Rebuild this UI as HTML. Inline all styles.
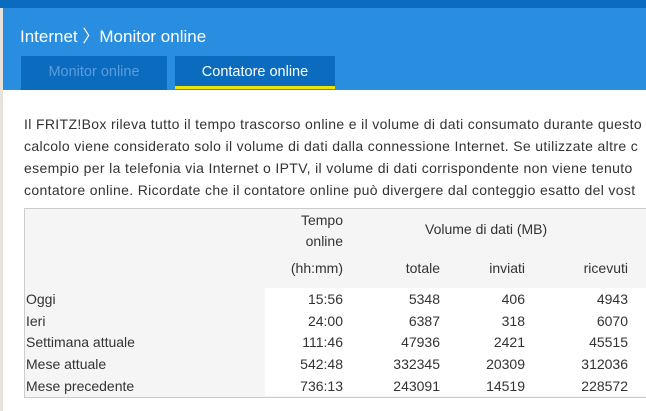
<!DOCTYPE html>
<html><head><meta charset="utf-8"><style>
*{margin:0;padding:0;box-sizing:border-box}
body{width:646px;height:411px;overflow:hidden;background:#fff;font-family:"Liberation Sans",sans-serif;color:#333;position:relative}
.top{position:absolute;left:0;top:0;width:646px;height:8px;background:#0a6bbf}
.strip{position:absolute;left:0;top:8px;width:3px;height:403px;background:#e6e3dc}
.hdr{position:absolute;left:3px;top:8px;width:643px;height:82px;background:#2a8ee0}
.title{position:absolute;left:20px;top:22px;color:#fff;font-size:17px}
.tab{position:absolute;top:56px;height:34px;background:#0a6bbf;font-size:14.5px;text-align:center;line-height:32px}
.t1{left:21px;width:146px;color:#5c9cdc}
.t2{left:175px;width:160px;color:#fff;border-bottom:3px solid #f0e400;height:33px}
.p{position:absolute;left:24px;top:113px;font-size:14px;line-height:22px;white-space:nowrap;color:#333;letter-spacing:0.35px}
.tbl{position:absolute;left:24px;top:208px;width:640px;height:190px;border:1px solid #ccc;background:#f5f5f5}
.white{position:absolute;left:240px;top:79px;width:400px;height:108px;background:#fff}
.t{position:absolute;font-size:14px;white-space:nowrap}
.r{text-align:right}
</style></head><body>
<div class="top"></div><div class="strip"></div>
<div class="hdr"></div>
<div class="title">Internet 〉Monitor online</div>
<div class="tab t1">Monitor online</div>
<div class="tab t2">Contatore online</div>
<div class="p">Il FRITZ!Box rileva tutto il tempo trascorso online e il volume di dati consumato durante questo<br>calcolo viene considerato solo il volume di dati dalla connessione Internet. Se utilizzate altre c<br>esempio per la telefonia via Internet o IPTV, il volume di dati corrispondente non viene tenuto<br>contatore online. Ricordate che il contatore online può divergere dal conteggio esatto del vost</div>
<div class="tbl"><div class="white"></div></div>
<div class="t r" style="left:243px;width:100px;top:210px;line-height:21px">Tempo<br>online</div>
<div class="t" style="left:425px;top:221px">Volume di dati (MB)</div>
<div class="t r" style="left:243px;width:100px;top:260px">(hh:mm)</div>
<div class="t r" style="left:340px;width:100px;top:260px">totale</div>
<div class="t r" style="left:425px;width:100px;top:260px">inviati</div>
<div class="t r" style="left:528px;width:100px;top:260px">ricevuti</div>
<div class="t" style="left:26px;top:289px;line-height:21.7px">Oggi<br>Ieri<br>Settimana attuale<br>Mese attuale<br>Mese precedente</div>
<div class="t r" style="left:243px;width:100px;top:289px;line-height:21.7px">15:56<br>24:00<br>111:46<br>542:48<br>736:13</div>
<div class="t r" style="left:340px;width:100px;top:289px;line-height:21.7px">5348<br>6387<br>47936<br>332345<br>243091</div>
<div class="t r" style="left:425px;width:100px;top:289px;line-height:21.7px">406<br>318<br>2421<br>20309<br>14519</div>
<div class="t r" style="left:528px;width:100px;top:289px;line-height:21.7px">4943<br>6070<br>45515<br>312036<br>228572</div>
</body></html>
